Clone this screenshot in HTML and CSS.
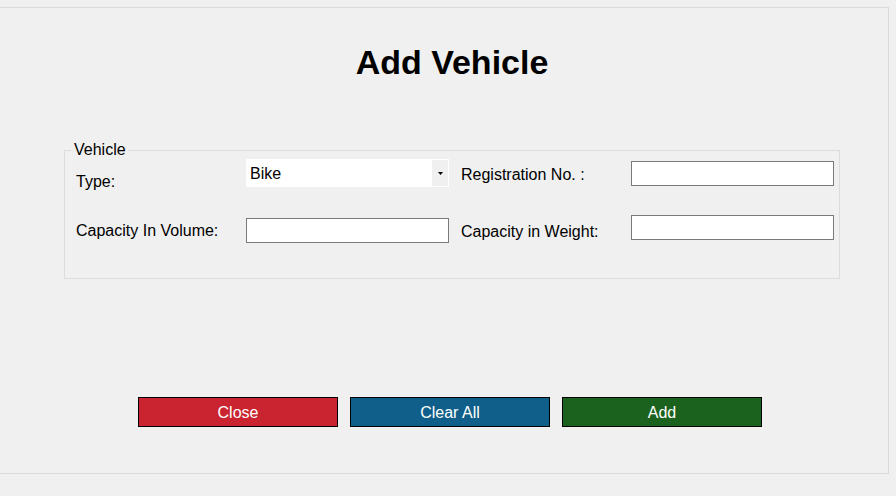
FILE: index.html
```html
<!DOCTYPE html>
<html>
<head>
<meta charset="utf-8">
<title>Add Vehicle</title>
<link rel="stylesheet" href="styles.css">
</head>
<body>
<div class="panel">
  <h1 class="title">Add Vehicle</h1>
  <fieldset class="group">
    <legend class="group-legend">Vehicle</legend>
    <div class="grid">
      <label class="lbl lbl-type">Type:</label>
      <div class="combo">
        <span class="combo-text">Bike</span>
        <span class="combo-btn"><svg width="5" height="3" viewBox="0 0 5 3"><path d="M0 0H5L2.5 3Z" fill="#000"/></svg></span>
      </div>
      <label class="lbl lbl-reg">Registration No. :</label>
      <input class="tb tb-reg" type="text">
      <label class="lbl lbl-vol">Capacity In Volume:</label>
      <input class="tb tb-vol" type="text">
      <label class="lbl lbl-wt">Capacity in Weight:</label>
      <input class="tb tb-wt" type="text">
    </div>
  </fieldset>
  <div class="actions">
    <button class="btn btn-close">Close</button>
    <button class="btn btn-clear">Clear All</button>
    <button class="btn btn-add">Add</button>
  </div>
</div>
</body>
</html>
```
FILE: styles.css
```css
html, body {
  margin: 0;
  padding: 0;
  background: #f0f0f0;
}
body {
  font-family: "Liberation Sans", Arial, sans-serif;
  color: #000;
  overflow: hidden;
}
.panel {
  box-sizing: content-box;
  margin-top: 7px;
  width: 888px;
  height: 465px;
  padding-top: 0;
  border-top: 1px solid #dadada;
  border-right: 1px solid #dadada;
  border-bottom: 1px solid #dadada;
  background: #f0f0f0;
}
.title {
  margin: 0;
  padding: 34px 0 0 16px;
  font-size: 34px;
  font-weight: 700;
  line-height: 40px;
  text-align: center;
}
.group {
  box-sizing: border-box;
  width: 776px;
  margin: 59px 0 0 64px;
  padding: 0 0 35px 6px;
  border: 1px solid #dcdcdc;
  min-width: 0;
}
.group-legend {
  padding: 0 2px 0 3px;
  font-size: 16px;
  line-height: 18px;
}
.grid {
  display: grid;
  grid-template-columns: 170px 215px 170px 203px;
  grid-template-rows: 56px 28px;
  align-items: start;
  padding-left: 5px;
}
.lbl {
  display: block;
  font-size: 16px;
  line-height: 18px;
  white-space: nowrap;
}
.lbl-type { margin-top: 14px; }
.lbl-reg { margin-top: 7px; }
.lbl-vol { margin-top: 7px; }
.lbl-wt { margin-top: 8px; }
.tb {
  box-sizing: border-box;
  display: block;
  width: 203px;
  height: 25px;
  margin: 0;
  padding: 0 3px;
  border: 1px solid #7a7a7a;
  background: #fff;
  font-family: "Liberation Sans", Arial, sans-serif;
  font-size: 16px;
  outline: none;
}
.tb-reg { margin-top: 2px; }
.tb-vol { margin-top: 3px; }
.tb-wt { margin-top: 0; }
.combo {
  display: flex;
  width: 203px;
  height: 28px;
  background: #fff;
  box-sizing: border-box;
}
.combo-text {
  flex: 1;
  padding: 1px 0 0 4px;
  font-size: 16px;
  line-height: 27px;
}
.combo-btn {
  width: 16px;
  margin: 1px 1px 1px 0;
  background: #f0f0f0;
  display: flex;
  align-items: center;
  justify-content: center;
  padding-top: 1px;
  box-sizing: border-box;
}
.combo-btn svg {
  display: block;
}
.actions {
  display: flex;
  gap: 12px;
  margin-top: 118px;
  padding-left: 138px;
}
.btn {
  box-sizing: border-box;
  width: 200px;
  height: 30px;
  margin: 0;
  padding: 1px 0 0;
  border: 1px solid #000;
  color: #fff;
  font-family: "Liberation Sans", Arial, sans-serif;
  font-size: 16px;
  line-height: 27px;
  cursor: pointer;
}
.btn-close { background: #c9242f; }
.btn-clear { background: #0f5f8a; }
.btn-add { background: #1a621d; }
```
